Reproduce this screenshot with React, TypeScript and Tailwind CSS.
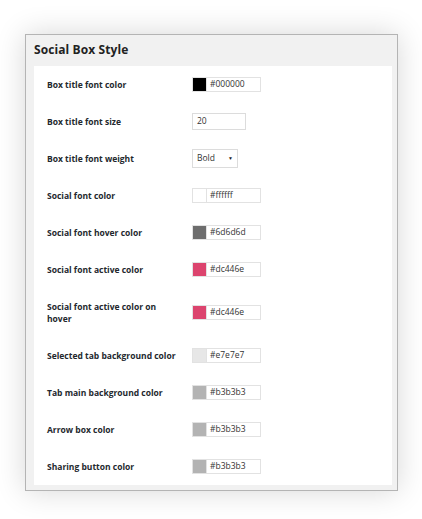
import React from 'react';

type Row =
  | { label: string; kind: 'color'; value: string; swatch: string }
  | { label: string; kind: 'number'; value: string }
  | { label: string; kind: 'select'; value: string };

const rows: Row[] = [
  { label: 'Box title font color', kind: 'color', value: '#000000', swatch: '#000000' },
  { label: 'Box title font size', kind: 'number', value: '20' },
  { label: 'Box title font weight', kind: 'select', value: 'Bold' },
  { label: 'Social font color', kind: 'color', value: '#ffffff', swatch: '#ffffff' },
  { label: 'Social font hover color', kind: 'color', value: '#6d6d6d', swatch: '#6d6d6d' },
  { label: 'Social font active color', kind: 'color', value: '#dc446e', swatch: '#dc446e' },
  { label: 'Social font active color on hover', kind: 'color', value: '#dc446e', swatch: '#dc446e' },
  { label: 'Selected tab background color', kind: 'color', value: '#e7e7e7', swatch: '#e7e7e7' },
  { label: 'Tab main background color', kind: 'color', value: '#b3b3b3', swatch: '#b3b3b3' },
  { label: 'Arrow box color', kind: 'color', value: '#b3b3b3', swatch: '#b3b3b3' },
  { label: 'Sharing button color', kind: 'color', value: '#b3b3b3', swatch: '#b3b3b3' },
];

function Control({ row }: { row: Row }) {
  if (row.kind === 'number') {
    return (
      <div className="w-[54px] h-[17px] border border-[#dcdcdc] bg-white flex items-center pl-[4px] text-[8.5px] text-[#333]">
        {row.value}
      </div>
    );
  }
  if (row.kind === 'select') {
    return (
      <div className="w-[46px] h-[19px] border border-[#dcdcdc] bg-white flex items-center justify-between pl-[4px] pr-[4px] text-[8.5px] text-[#333]">
        <span>{row.value}</span>
        <span className="text-[5px] text-[#222]">▼</span>
      </div>
    );
  }
  return (
    <div className="flex h-[15px]">
      <div className="w-[15px] h-[15px] border border-[#e2e2e2]" style={{ backgroundColor: row.swatch }} />
      <div className="w-[54px] h-[15px] border border-[#e2e2e2] border-l-0 bg-white flex items-center pl-[3px] text-[8.5px] text-[#333]">
        {row.value}
      </div>
    </div>
  );
}

export default function App() {
  return (
    <div className="w-[422px] h-[519px] bg-white pt-[34px] px-[24px] pl-[25px] font-['Open_Sans',sans-serif]">
      <div className="w-[373px] h-[457px] border border-[#b4b4b4] bg-[#f1f1f1] shadow-[0_0_28px_rgba(0,0,0,0.16)] flex flex-col">
        {/* Header */}
        <div className="h-[31px] flex items-center pl-[8px] pb-[2px]">
          <h2 className="text-[12px] font-bold text-[#222] tracking-[0.1px]">Social Box Style</h2>
        </div>

        {/* Settings panel */}
        <div className="ml-[8px] mr-[5px] bg-white flex-1 mb-[5px] pl-[13px]">
          {rows.map((row, i) => {
            const tall = row.label.length > 30;
            return (
              <div key={i} className={`flex items-center ${tall ? 'h-[49px]' : 'h-[37px]'}`}>
                <div className="w-[145px] pr-[10px] text-[8.5px] leading-[12px] font-bold text-[#23282d]">
                  {row.label}
                </div>
                <Control row={row} />
              </div>
            );
          })}
        </div>
      </div>
    </div>
  );
}
